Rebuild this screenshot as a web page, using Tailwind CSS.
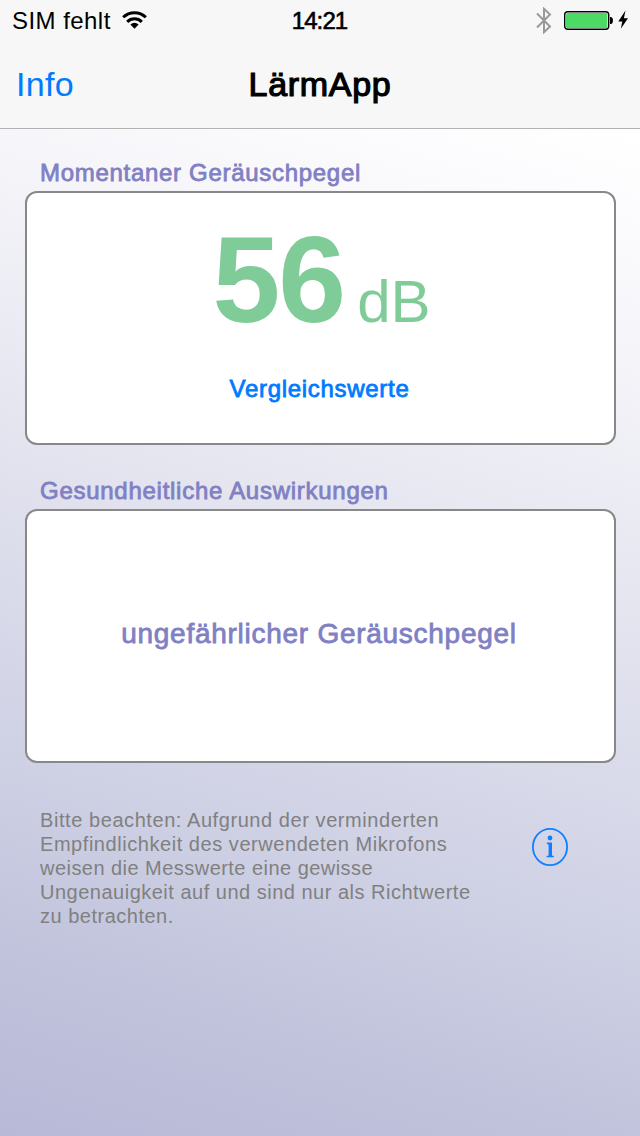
<!DOCTYPE html>
<html lang="de">
<head>
<meta charset="utf-8">
<title>LärmApp</title>
<script src="https://cdn.jsdelivr.net/npm/@tailwindcss/browser@4"></script>
</head>
<body class="w-[640px] h-[1136px] overflow-hidden flex flex-col font-['Liberation_Sans',Arial,sans-serif] bg-[linear-gradient(197deg,#ffffff_10%,#fcfcfe_16%,#f6f6fa_25%,#e5e5f0_46%,#cccee3_74%,#c1c3dc_86%,#b8b9d7_100%)]">
  <header class="h-[129px] shrink-0 bg-[#f7f7f7] border-b border-[#b2b2b2] text-black">
    <div class="h-10 grid grid-cols-[1fr_auto_1fr] items-center pl-3 pr-[11px]">
      <div class="flex items-center gap-[11px]">
        <span class="text-2xl leading-[42px] tracking-[0.45px] h-10">SIM fehlt</span>
        <svg class="w-[25px] h-[20px]" viewBox="0 0 26 20" fill="none" stroke="#000" stroke-width="3.1">
          <path d="M1.2 7.2A16.8 16.8 0 0 1 24.8 7.2"/>
          <path d="M5.4 11.9A10.8 10.8 0 0 1 20.6 11.9"/>
          <path d="M13 19L8.7 14.8Q13 11 17.3 14.8Z" fill="#000" stroke="none"/>
        </svg>
      </div>
      <span class="text-2xl leading-[42px] h-10 tracking-[-0.9px] pr-0.5 [-webkit-text-stroke:0.600px_#000]">14:21</span>
      <div class="flex items-center justify-end">
        <svg class="w-4 h-[27px] mr-3" viewBox="0 0 16 27" fill="none" stroke="#999" stroke-width="2">
          <path d="M1 6.5L14 19.5L8 25.2V1.8L14 7.5L1 20.5"/>
        </svg>
        <svg class="w-[50px] h-5" viewBox="0 0 50 20">
          <rect x=".7" y="1.7" width="44" height="17.6" rx="3" fill="#fff" stroke="#000" stroke-width="1.4"/>
          <rect x="2" y="3" width="41.4" height="15" rx="1.6" fill="#4cd964"/>
          <path d="M46 7h1.2q1.8.8 1.8 3.500t-1.800 3.500H46z"/>
        </svg>
        <svg class="w-[11px] h-5 ml-1" viewBox="0 0 11 20"><path d="M7.500.5L.3 11.500H4.300L2.800 18.800L10 8.200H5.900Z"/></svg>
      </div>
    </div>
    <div class="h-[88px] grid grid-cols-[1fr_auto_1fr] items-center px-4">
      <a class="text-[34px] leading-[88px] text-[#007aff] tracking-[0.3px]">Info</a>
      <h1 class="text-[34px] leading-[88px] tracking-[0.7px] [-webkit-text-stroke:1.200px_#000]">LärmApp</h1>
    </div>
  </header>

  <main class="px-[25px] pt-[30px]">
    <section>
      <h2 class="h-8 pl-[15px] text-2xl leading-7 text-[#8080c3] tracking-[0.7px] [-webkit-text-stroke:0.8px_#8080c3]">Momentaner Geräuschpegel</h2>
      <div class="h-[254px] w-[591px] rounded-xl border-2 border-[#888] bg-white flex flex-col items-center">
        <div class="mt-[18px] h-[138px] flex items-baseline text-[#80cc99] leading-[138px] gap-[13px] pl-[2px]">
          <span class="text-[122px] font-bold tracking-[-2px]">56</span>
          <span class="text-[60px]">dB</span>
        </div>
        <a class="mt-[26px] pr-0.5 text-2xl leading-7 text-[#007aff] tracking-[0.7px] [-webkit-text-stroke:0.8px_#007aff]">Vergleichswerte</a>
      </div>
    </section>
    <section class="mt-8">
      <h2 class="h-8 pl-[15px] text-2xl leading-7 text-[#8080c3] tracking-[0.730px] [-webkit-text-stroke:0.8px_#8080c3]">Gesundheitliche Auswirkungen</h2>
      <div class="h-[254px] w-[591px] rounded-xl border-2 border-[#888] bg-white flex items-center justify-center">
        <p class="pb-1 pr-[3px] text-[28px] leading-8 text-[#8080c3] tracking-[0.730px] [-webkit-text-stroke:0.8px_#8080c3]">ungefährlicher Geräuschpegel</p>
      </div>
    </section>
    <div class="mt-[46px] pl-[15px] flex">
      <p class="w-[492px] text-[20px] leading-[23.900px] text-[#808080] tracking-[0.5px] whitespace-nowrap"><span class="tracking-[0.570px]">Bitte beachten: Aufgrund der verminderten</span><br><span class="tracking-[0.550px]">Empfindlichkeit des verwendeten Mikrofons</span><br><span class="tracking-[0.460px]">weisen die Messwerte eine gewisse</span><br>Ungenauigkeit auf und sind nur als Richtwerte<br>zu betrachten.</p>
      <svg class="w-9 h-[38px] mt-[19px]" viewBox="0 0 36 38" fill="none">
        <ellipse cx="18" cy="19" rx="17.100" ry="18.100" stroke="#117fff" stroke-width="1.800"/>
        <circle cx="18" cy="10" r="2.400" fill="#117fff"/>
        <path d="M14.800 14.600H20V27.400L21.800 28V29.200H14.600V28L16.600 27.400V16.500L14.800 16Z" fill="#117fff"/>
      </svg>
    </div>
  </main>
</body>
</html>
